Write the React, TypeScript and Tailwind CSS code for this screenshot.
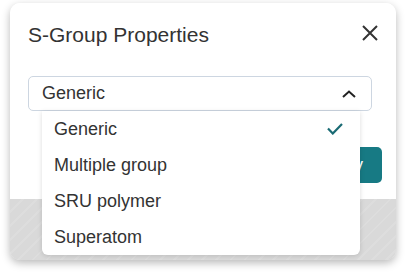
import React from "react";

const options = ["Generic", "Multiple group", "SRU polymer", "Superatom"];

const SGroupDialog = () => {
  const selected = "Generic";
  return (
    <div className="relative w-[386px] h-[257px] rounded-[10px] shadow-[0_3px_8px_rgba(0,0,0,0.28)] flex flex-col overflow-hidden">
      <div className="h-[196px] bg-white pl-[18px] pr-[14px] pt-[20px] flex flex-col">
        <div className="flex items-start justify-between h-[24px]">
          <h2 className="text-[21px] leading-[24px] text-[#333]">S-Group Properties</h2>
          <button className="mt-[2px] mr-[4px] text-[#333]">
            <svg width="16" height="16" viewBox="0 0 16 16" fill="none" stroke="currentColor" strokeWidth="2">
              <path d="M1 1 15 15M15 1 1 15" />
            </svg>
          </button>
        </div>
        <div className="mt-[29px] w-[344px] h-[35px] border border-[#cdd6e1] rounded-[5px] flex items-center justify-between pl-[13px] pr-[15px]">
          <span className="text-[18px] text-[#333]">{selected}</span>
          <svg width="14" height="8" viewBox="0 0 14 8" fill="none" stroke="#222" strokeWidth="2">
            <path d="M1 7 7 1.5 13 7" />
          </svg>
        </div>
        <div className="mt-[36px] flex justify-end">
          <button className="h-[36px] pl-[16px] pr-[19px] rounded-[5px] bg-[#177a84] text-white text-[18px]">Apply</button>
        </div>
      </div>
      <div className="flex-1 bg-[#dadada] bg-[repeating-linear-gradient(135deg,#d9d9d9_0px,#d9d9d9_8px,#dddddd_8px,#dddddd_10px)]" />
      <ul className="absolute left-[32px] top-[108px] w-[318px] bg-white rounded-b-[6px] shadow-[0_1px_5px_rgba(0,0,0,0.14)]">
        {options.map((o) => (
          <li key={o} className="h-[36px] flex items-center justify-between pl-[12px] pr-[17px] text-[18px] text-[#333]">
            <span>{o}</span>
            {o === selected && (
              <svg width="16" height="12" viewBox="0 0 16 12" fill="none" stroke="#1a6b74" strokeWidth="2.2">
                <path d="M1 5.5 5.8 10.5 15 1" />
              </svg>
            )}
          </li>
        ))}
      </ul>
    </div>
  );
};

export default function App() {
  return (
    <div className="w-[406px] h-[276px] bg-white pl-[10px] pt-[3px] font-['Liberation_Sans',Arial,sans-serif]">
      <SGroupDialog />
    </div>
  );
}
